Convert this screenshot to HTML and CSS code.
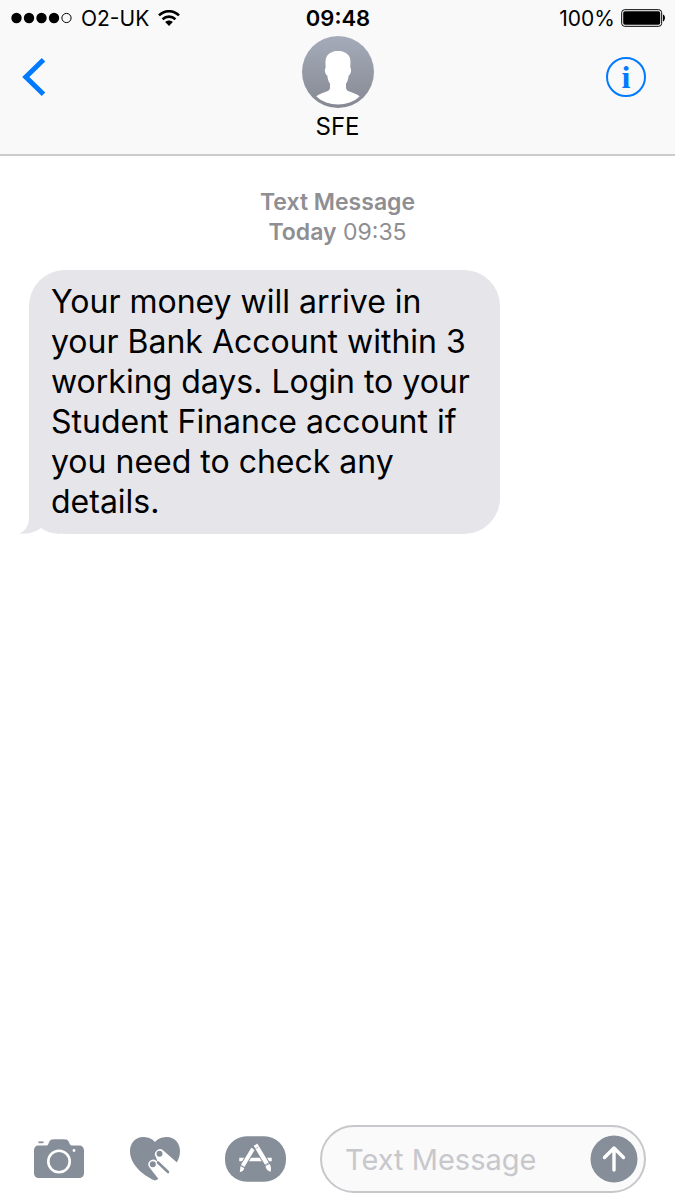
FILE: index.html
```html
<!DOCTYPE html>
<html lang="en">
<head>
  <meta charset="utf-8">
  <meta name="viewport" content="width=device-width, initial-scale=1">
  <title>SFE</title>
  <link rel="stylesheet" href="styles.css">
</head>
<body>
  <header class="top">
    <!-- Status bar: carrier, clock, battery -->
    <div class="status-bar">
      <div class="carrier">
        <svg class="signal" viewBox="0 0 61 12"><circle cx="5.5" cy="6" r="5.2"/><circle cx="18" cy="6" r="5.2"/><circle cx="30.5" cy="6" r="5.2"/><circle cx="43" cy="6" r="5.2"/><circle cx="55.5" cy="6" r="4.6" fill="none" stroke="#000" stroke-width="1"/></svg>
        <span>O2-UK</span>
        <svg class="wifi" viewBox="0 0 22 16"><g fill="none" stroke="#000" stroke-width="2.6"><path d="M1 5.4C6.8-.2 15.2-.2 21 5.4"/><path d="M4.6 9.2c3.7-3.4 9.1-3.4 12.8 0"/></g><path d="M7.2 12c2.2-2 5.4-2 7.6 0L11 16z"/></svg>
      </div>
      <time class="clock">09:48</time>
      <div class="battery">
        <span>100%</span>
        <svg class="battery-icon" viewBox="0 0 44 18"><rect x=".7" y=".7" width="40" height="16.6" rx="3" fill="none" stroke="#000" stroke-width="1"/><rect x="2.2" y="2.2" width="37" height="13.6" rx="1.8"/><path d="M42 5.6c2.6.8 2.6 6 0 6.8z"/></svg>
      </div>
    </div>

    <!-- Conversation header -->
    <div class="nav">
      <button class="icon-btn back" aria-label="Back">
        <svg viewBox="0 0 24 38"><path d="M21.5 1.8L3.800 19l17.700 17.200" fill="none" stroke="#007aff" stroke-width="5"/></svg>
      </button>
      <div class="contact">
        <svg class="avatar" viewBox="0 0 72 72">
          <defs>
            <linearGradient id="avatar-fill" x1="0" y1="0" x2="0" y2="1"><stop offset="0" stop-color="#a5abb9"/><stop offset="1" stop-color="#868993"/></linearGradient>
          </defs>
          <circle cx="36" cy="36" r="36" fill="url(#avatar-fill)"/>
          <path d="M36 15c-5 0-9 2-11 5-2 3-1.500 8-1.300 12-1.500.2-.8 6.500 1.600 7.500.5 3.500 1 6 2.700 8v4.500c0 4-8 4-13.700 8.300C20 66 28 68.500 36 68.500S52 66 57.700 60.300C52 56 44 56 44 52v-4.500c1.700-2 2.200-4.500 2.700-8 2.400-1 3.100-7.300 1.600-7.500.2-4 .7-9-1.300-12-2-3-6-5-11-5z" fill="#fff"/>
        </svg>
        <h1 class="contact-name">SFE</h1>
      </div>
      <button class="icon-btn info" aria-label="Details"><span class="info-ring">i</span></button>
    </div>
  </header>

  <main class="thread">
    <p class="timestamp"><b>Text Message</b><br><b>Today</b> 09:35</p>
    <div class="bubble">
      Your money will arrive in your Bank Account within 3 working days. Login to your Student Finance account if you need to check any details.
      <svg class="tail" viewBox="0 0 40 40"><path d="M9 0v24c0 7-3 12-9 15.500 8 .8 15-1 21-5.500 5 3.500 10 5.500 19 6V0z"/></svg>
    </div>
  </main>

  <!-- Bottom: attachments and message field -->
  <form class="composer">
    <div class="tools">
      <button type="button" class="icon-btn" aria-label="Camera">
        <svg class="camera" viewBox="0 0 52 40">
          <path d="M5 6.500h9c1.500 0 2-5.500 4.500-6 2-.5 13-.5 15 0C36 1 36.500 6.500 38.500 6.500H46c3 0 5 2 5 5V34c0 3-2 5-5 5H6c-3 0-5-2-5-5V11.500c0-3 1.500-5 4-5z"/>
          <path d="M5.500 3.300h5" fill="none" stroke="#868e99" stroke-width="1.800"/>
          <circle cx="26" cy="22.500" r="10.700" fill="none" stroke="#fff" stroke-width="2.600"/>
          <circle cx="41" cy="11.500" r="1.400" fill="#fff"/>
        </svg>
      </button>
      <button type="button" class="icon-btn" aria-label="Digital Touch">
        <svg class="heart" viewBox="0 0 52 44">
          <path d="M26 5C22 .5 17 0 14 0 6 0 1 6.500 1 14c0 13 12 24 25 29.500C39 38 51 27 51 14 51 6.500 46 0 38 0c-3 0-8 .5-12 5z"/>
          <!-- two fingers -->
          <path d="M20.500 30.500L31 44h21V29L34 13.200a5 5 0 0 0-7 7l1.500 4.300-1.300-.8a4.800 4.800 0 0 0-6.700 6.800z" fill="#fff"/>
          <path d="M29 25.500L39 35" fill="none" stroke="#868e99" stroke-width="2.600" stroke-linecap="round"/>
          <circle cx="23.800" cy="27.300" r="3"/>
          <circle cx="30.500" cy="16.800" r="3"/>
        </svg>
      </button>
      <button type="button" class="icon-btn" aria-label="Apps">
        <svg class="apps" viewBox="0 0 62 46">
          <rect width="62" height="46" rx="22"/>
          <g fill="none" stroke="#fff">
            <path d="M14.500 23.500h33" stroke-width="3.600"/>
            <path d="M28.500 12.500L18 30" stroke="#868e99" stroke-width="6"/>
            <path d="M28.500 12.500L18 30" stroke-width="4"/>
            <path d="M31 8.500l12 20" stroke="#868e99" stroke-width="6.400"/>
            <path d="M31 8.500l12 20" stroke-width="4.400"/>
          </g>
          <path d="M15.800 30.200l3.800 2.200-1.200 2.500-3.400 1.600z" fill="#fff"/>
          <path d="M41.200 30.200l4.300-2.200c1.300 2.500 1.500 5 .9 8-3-.7-4.800-2.500-5.200-5.800z" fill="#fff"/>
          <path d="M39.800 29.500l5.500-3" fill="none" stroke="#868e99" stroke-width=".8"/>
          <path d="M28.800 13.800l5.200-3" fill="none" stroke="#868e99" stroke-width=".6"/>
        </svg>
      </button>
    </div>
    <div class="field">
      <input class="field-input" type="text" placeholder="Text Message" aria-label="Text Message">
      <button type="button" class="icon-btn" aria-label="Send">
        <svg class="send" viewBox="0 0 48 48"><circle cx="24" cy="24" r="23.500"/><path d="M24 35V13.500M14.500 22.500l9.500-9.500 9.500 9.500" fill="none" stroke="#fff" stroke-width="3.400" stroke-linecap="round" stroke-linejoin="round"/></svg>
      </button>
    </div>
  </form>
</body>
</html>
```
FILE: styles.css
```css
* { box-sizing: border-box; }
body {
  margin: 0;
  min-height: 100vh;
  display: flex;
  flex-direction: column;
  background: #fff;
  color: #000;
  font-family: Inter, "Liberation Sans", sans-serif;
}
svg { display: block; }
.icon-btn {
  padding: 0;
  border: none;
  background: none;
  cursor: pointer;
}

/* Header */
.top {
  background: #f9f9f9;
  border-bottom: 2px solid #ccccce;
}
.status-bar {
  display: grid;
  grid-template-columns: 1fr auto 1fr; /* keeps the clock centred */
  align-items: center;
  height: 36px;
  padding: 0 10px 0 11px;
  font-size: 21px;
}
.carrier,
.battery {
  display: flex;
  align-items: center;
  gap: 8px;
}
.carrier { gap: 9px; }
.battery {
  justify-content: flex-end;
  gap: 6px;
}
.signal { width: 61px; height: 12px; }
.wifi { width: 22px; height: 16px; }
.battery-icon { width: 44px; height: 18px; }
.clock {
  font-size: 22px;
  font-weight: 600;
}
.nav {
  display: grid;
  grid-template-columns: 1fr auto 1fr;
  padding: 0 22px 13px;
}
.back {
  justify-self: start;
  align-self: start;
  margin-top: 22px;
}
.back svg { width: 24px; height: 38px; }
.contact {
  display: flex;
  flex-direction: column;
  align-items: center;
}
.avatar { width: 72px; height: 72px; }
.contact-name {
  margin: 5px 0 0;
  font-size: 24px;
  font-weight: 400;
  line-height: 28px;
}
.info {
  justify-self: end;
  align-self: start;
  margin: 21px 7px 0 0;
}
.info-ring {
  display: block;
  width: 40px;
  height: 40px;
  border: 2px solid #007aff;
  border-radius: 50%;
  color: #007aff;
  font: bold 32px/36px "Liberation Serif", serif;
}

/* Messages */
.thread {
  flex: 1;
  padding: 31px 29px;
}
.timestamp {
  margin: 0 0 23px;
  text-align: center;
  color: #8e8e93;
  font-size: 23px;
  line-height: 30px;
}
.timestamp b { font-weight: 600; }
.bubble {
  position: relative;
  isolation: isolate; /* lets the tail sit under the text */
  width: fit-content;
  max-width: 471px;
  padding: 12px 22px;
  border-radius: 36px;
  background: #e5e5ea;
  font-size: 32px;
  line-height: 40px;
}
.tail {
  position: absolute;
  left: -9px;
  bottom: 0;
  z-index: -1;
  width: 40px;
  height: 40px;
  fill: #e5e5ea;
}

/* Composer */
.composer {
  display: flex;
  align-items: center;
  gap: 34px;
  padding: 0 29px 7px 33px;
}
.tools {
  display: flex;
  align-items: center;
  gap: 44px;
  fill: #868e99;
}
.camera { width: 52px; height: 40px; }
.heart { width: 52px; height: 44px; }
.apps { width: 61px; height: 46px; }
.field {
  flex: 1;
  display: flex;
  align-items: center;
  min-width: 0;
  height: 68px;
  padding: 0 6px 0 23px;
  border: 2px solid #c7c7cc;
  border-radius: 34px;
  background: #fafafa;
}
.field-input {
  flex: 1;
  min-width: 0;
  padding: 0;
  border: none;
  outline: none;
  background: none;
  font-family: inherit;
  font-size: 29px;
}
.field-input::placeholder { color: #c7c7cc; }
.send {
  width: 48px;
  height: 48px;
  fill: #868e99;
}
```
